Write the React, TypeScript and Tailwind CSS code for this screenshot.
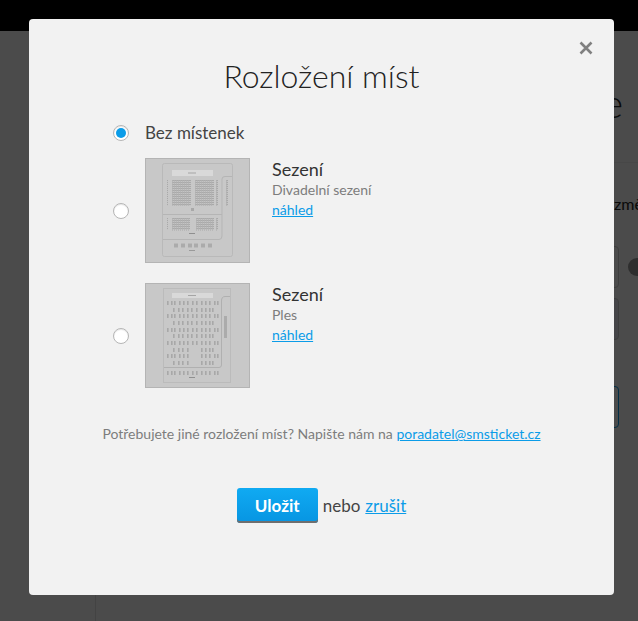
const font = "[font-family:Lato,'Noto_Sans',sans-serif]"

// Seat blocks are just stripes, the thumbnail is tiny and blurry anyway
function SeatBlock({ x, y, w, h }: { x: number; y: number; w: number; h: number }) {
  const rows = Array.from({ length: Math.floor(h / 2) }, (_, i) => i)
  const cols = Array.from({ length: Math.floor(w / 2) }, (_, i) => i)
  return (
    <g>
      {rows.map((r) => (
        <rect key={`r${r}`} x={x} y={y + r * 2} width={w} height={1.1} fill="#a9a9a9" />
      ))}
      {cols.map((c) => (
        <rect key={`c${c}`} x={x + c * 2} y={y} width={0.7} height={h} fill="#b2b2b2" />
      ))}
    </g>
  )
}

function TheatrePlan() {
  return (
    <svg viewBox="0 0 105 105" className="block h-full w-full">
      <rect x="17.5" y="5.5" width="70" height="93" rx="2" fill="#c8c8c8" stroke="#b9b9b9" />
      <rect x="27" y="12" width="41" height="6" fill="#d9d9d9" />
      <rect x="43" y="14.5" width="8" height="1" fill="#a5a5a5" />
      <SeatBlock x={27} y={22} w={19} h={26} />
      <SeatBlock x={50} y={22} w={19} h={26} />
      <SeatBlock x={22} y={22} w={1} h={26} />
      <SeatBlock x={71} y={22} w={2} h={26} />
      <SeatBlock x={81} y={22} w={2} h={26} />
      <rect x="46" y="50" width="3" height="3" fill="#a8a8a8" />
      <path d="M18 56.5H77M18 81.5H74Q77 81.5 77 78V21Q77 18.5 80 18.5H87" fill="none" stroke="#b5b5b5" />
      <SeatBlock x={27} y={60} w={18} h={13} />
      <SeatBlock x={51} y={60} w={18} h={13} />
      <SeatBlock x={22} y={60} w={1} h={13} />
      <SeatBlock x={71} y={60} w={2} h={13} />
      <rect x="44" y="75" width="6" height="1" fill="#8f8f8f" />
      {[29, 36, 43, 49, 56, 63].map((x) => (
        <rect key={x} x={x} y={85.5} width="4" height="4" fill="#ababab" />
      ))}
      <rect x="44" y="92" width="6" height="1" fill="#9a9a9a" />
    </svg>
  )
}

function BallPlan() {
  const rows = [20, 27, 33, 40, 47, 53, 60, 67, 73, 80, 90]
  const wide = [22, 26, 29, 34, 38, 42, 47, 51, 56, 60, 64, 69, 72]
  const narrow = [28, 33, 37, 42, 46, 51, 56, 60, 64, 67]
  return (
    <svg viewBox="0 0 105 105" className="block h-full w-full">
      <rect x="18.5" y="5.5" width="67" height="94" fill="#c8c8c8" stroke="#bbbbbb" />
      <rect x="27" y="10" width="41" height="5" fill="#d9d9d9" />
      <rect x="43" y="12" width="8" height="1" fill="#a5a5a5" />
      {rows.map((y, i) =>
        (i % 2 === 0 || i === 10 ? wide : narrow).map((x) => (
          <rect
            key={`${y}-${x}`}
            x={x}
            y={y - 2}
            width="1.6"
            height="4"
            fill={i >= 7 && i < 10 && x > 42 && x < 52 ? "#c8c8c8" : "#a8a8a8"}
          />
        )),
      )}
      <path d="M19 84.5H74Q76.5 84.5 76.5 82V18Q76.5 13.5 80 13.5H85" fill="none" stroke="#b0b0b0" />
      <rect x="79" y="33" width="3" height="22" fill="#ababab" />
      <rect x="44" y="94" width="6" height="1" fill="#8f8f8f" />
    </svg>
  )
}

function Radio({ checked }: { checked?: boolean }) {
  return (
    <span className="flex h-4 w-4 shrink-0 items-center justify-center rounded-full border border-[#b5b5b5] bg-white shadow-[inset_0_1px_1px_rgba(0,0,0,0.1)]">
      {checked && <span className="h-2.5 w-2.5 rounded-full bg-[#0b9ce8]" />}
    </span>
  )
}

function LayoutOption({ name, kind, plan }: { name: string; kind: string; plan: React.ReactNode }) {
  return (
    <div className="flex items-center">
      <Radio />
      <div className="ml-4 flex items-start">
        <div className="h-[105px] w-[105px] bg-[#c8c8c8] shadow-[inset_0_0_0_1px_#b4b4b4]">{plan}</div>
        <div className="ml-[22px] pt-[1px]">
          <div className="text-[18px] leading-[20px] text-[#333]">{name}</div>
          <div className="mt-[1px] text-[14px] leading-[20px] text-[#7d7d7d]">{kind}</div>
          <a className="block text-[14px] leading-[20px] text-[#0b9ce8] underline">náhled</a>
        </div>
      </div>
    </div>
  )
}

export default function App() {
  return (
    <div className={`relative h-[621px] w-[638px] overflow-hidden bg-[#fafafa] ${font}`}>
      {/* page behind the dialog, only its right edge shows */}
      <div className="h-[31px] bg-black" />
      <div className="flex h-[590px]">
        <div className="w-[96px] shrink-0 border-r border-[#e2e2e2]" />
        <div className="flex-1">
          <div className="h-[132px] border-b border-[#eeeeee] pt-[48px] text-right text-[40px] leading-[48px] font-light text-[#222]">
            <span className="mr-[15px]">e</span>
          </div>
          <div className="flex flex-col items-end">
            <div className="mt-[29px] w-[24px] self-end overflow-hidden text-[16px] whitespace-nowrap text-[#222]">změ</div>
            <div className="mt-[30px] flex items-center">
              <div className="h-[42px] w-[80px] rounded border border-[#cccccc]" />
              <div className="ml-[9px] flex h-[18px] w-[10px] items-center justify-end rounded-l-full bg-[#999] text-[13px] font-bold text-[#fafafa]" />
            </div>
            <div className="mt-[10px] mr-[19px] h-[42px] w-[80px] rounded border border-[#cccccc] bg-[#e6e6f0]" />
            <div className="mt-[46px] mr-[19px] h-[42px] w-[80px] rounded border border-[#0b9ce8]" />
          </div>
        </div>
      </div>

      <div className="absolute inset-0 top-[31px] bg-black/70" />

      <div className="absolute top-[19px] left-[29px] flex h-[576px] w-[585px] flex-col rounded-[4px] bg-[#f2f2f2]">
        <button className="absolute top-[21px] right-[20px] text-[#808080]">
          <svg width="16" height="16" viewBox="0 0 16 16" className="block">
            <path d="M2.5 2.5L13.5 13.5M13.5 2.5L2.5 13.5" stroke="currentColor" strokeWidth="2.6" />
          </svg>
        </button>
        <h2 className="mt-[36px] text-center text-[32px] leading-[42px] font-light text-[#222]">Rozložení míst</h2>

        <div className="mt-[26px] flex flex-col pl-[84px]">
          <div className="flex h-[20px] items-center">
            <Radio checked />
            <span className="ml-4 text-[17px] text-[#444]">Bez místenek</span>
          </div>
          <div className="mt-[15px] flex flex-col gap-5">
            <LayoutOption name="Sezení" kind="Divadelní sezení" plan={<TheatrePlan />} />
            <LayoutOption name="Sezení" kind="Ples" plan={<BallPlan />} />
          </div>
        </div>

        <p className="mt-[36px] text-center text-[14px] leading-[20px] text-[#7d7d7d]">
          Potřebujete jiné rozložení míst? Napište nám na{" "}
          <a className="text-[#0b9ce8] underline">poradatel@smsticket.cz</a>
        </p>

        <div className="mt-[44px] flex items-center justify-center">
          <button className="h-[35px] w-[81px] rounded-[3px] bg-linear-to-b from-[#10aaf2] to-[#0795e2] text-[17px] font-bold text-white shadow-[inset_0_-2px_0_#6f6f6f]">
            Uložit
          </button>
          <span className="ml-[5px] text-[17px] text-[#444]">nebo</span>
          <a className="ml-[5px] text-[17px] text-[#0b9ce8] underline">zrušit</a>
        </div>
      </div>
    </div>
  )
}
